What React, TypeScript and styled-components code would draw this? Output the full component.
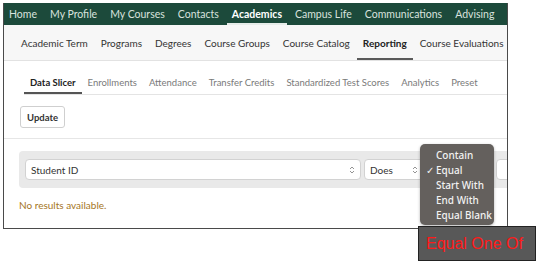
import styled, { createGlobalStyle } from 'styled-components'

const GlobalStyle = createGlobalStyle`
  html, body {
    margin: 0;
    padding: 0;
    background: #ffffff;
    font-family: Lato, "Open Sans", sans-serif;
  }
`

const Page = styled.div`
  position: relative;
  width: 540px;
  height: 265px;
  overflow: hidden;
  background: #fff;
`

const Frame = styled.div`
  margin: 3px 0 0 3px;
  width: 503px;
  height: 225px;
  border: 1px solid #4a4a4a;
  border-top: none;
  overflow: hidden;
  background: #fff;
`

const TopNav = styled.nav`
  display: flex;
  height: 22px;
  background: #1c4a3b;
  gap: 3px;
  white-space: nowrap;
  overflow: hidden;
`

const TopItem = styled.div<{ $active?: boolean }>`
  display: flex;
  align-items: center;
  flex: none;
  padding: 2px 5px 0;
  font-size: 10.5px;
  color: ${(p) => (p.$active ? '#ffffff' : '#d9e2de')};
  font-weight: ${(p) => (p.$active ? 700 : 400)};
  border-bottom: 2px solid ${(p) => (p.$active ? '#e6ece9' : 'transparent')};
  box-sizing: border-box;
`

const SubNav = styled.nav`
  display: flex;
  height: 36px;
  background: #f7f7f7;
  border-bottom: 1px solid #e2e2e2;
  padding-left: 11px;
  gap: 1px;
  box-sizing: border-box;
  white-space: nowrap;
`

const SubItem = styled.div<{ $active?: boolean }>`
  display: flex;
  align-items: center;
  padding: 2px 6px 0;
  font-size: 10px;
  color: ${(p) => (p.$active ? '#222' : '#333')};
  font-weight: ${(p) => (p.$active ? 700 : 400)};
  border-bottom: 2px solid ${(p) => (p.$active ? '#5a5a5a' : 'transparent')};
`

const Tabs = styled.div`
  display: flex;
  margin: 11px 0 0 20px;
  height: 23px;
  border-bottom: 1px solid #e4e4e4;
  box-sizing: border-box;
  white-space: nowrap;
`

const Tab = styled.div<{ $active?: boolean }>`
  display: flex;
  align-items: center;
  padding: 0 6px;
  font-size: 9.5px;
  color: ${(p) => (p.$active ? '#222' : '#7a7a7a')};
  font-weight: ${(p) => (p.$active ? 700 : 400)};
  border-bottom: 2px solid ${(p) => (p.$active ? '#555' : 'transparent')};
`

const Toolbar = styled.div`
  display: flex;
  padding: 11px 0 10px 16px;
  border-bottom: 1px solid #e6e6e6;
`

const Button = styled.button`
  height: 22px;
  padding: 0 6px;
  font-family: Lato, sans-serif;
  font-size: 9.5px;
  font-weight: 700;
  color: #333;
  background: #fff;
  border: 1px solid #cfcfcf;
  border-radius: 3px;
`

const Body = styled.div`
  padding: 12px 0 0 15px;
`

const FilterPanel = styled.div`
  display: flex;
  gap: 3px;
  padding: 8px 6px;
  background: #e9e9e9;
  border-radius: 4px;
  width: 600px;
`

const Select = styled.div<{ $w: number }>`
  display: flex;
  align-items: center;
  justify-content: space-between;
  flex: none;
  width: ${(p) => p.$w}px;
  height: 21px;
  padding: 0 5px;
  box-sizing: border-box;
  background: #fff;
  border: 1px solid #d2d2d2;
  border-radius: 4px;
  font-size: 10px;
  color: #333;
`

const Empty = styled.div`
  margin-top: 11px;
  font-size: 10px;
  color: #a57524;
`

const Menu = styled.div`
  position: absolute;
  left: 420px;
  top: 144px;
  width: 74px;
  height: 81px;
  padding-top: 4px;
  box-sizing: border-box;
  background: #64605d;
  border-radius: 5px;
  box-shadow: 0 1px 3px rgba(0, 0, 0, 0.3);
`

const MenuItem = styled.div`
  position: relative;
  height: 15px;
  line-height: 15px;
  padding-left: 16px;
  font-family: "Noto Sans", sans-serif;
  font-size: 10px;
  font-weight: 500;
  color: #f2f2f2;
`

const Check = styled.span`
  position: absolute;
  left: 6px;
`

const Hint = styled.div`
  position: absolute;
  left: 418px;
  top: 226px;
  width: 118px;
  height: 35px;
  display: flex;
  align-items: center;
  padding-left: 7px;
  box-sizing: border-box;
  background: #585858;
  border: 1px solid #222;
  font-family: "Liberation Sans", Arial, sans-serif;
  font-size: 16px;
  color: #ff1a1a;
`

const Chevron = () => (
  <svg width="6" height="10" viewBox="0 0 6 10">
    <path d="M1 4 L3 2 L5 4 M1 6 L3 8 L5 6" fill="none" stroke="#888" strokeWidth="0.9" />
  </svg>
)

const topItems = ['Home', 'My Profile', 'My Courses', 'Contacts', 'Academics', 'Campus Life', 'Communications', 'Advising', 'A']
const subItems = ['Academic Term', 'Programs', 'Degrees', 'Course Groups', 'Course Catalog', 'Reporting', 'Course Evaluations']
const tabs = ['Data Slicer', 'Enrollments', 'Attendance', 'Transfer Credits', 'Standardized Test Scores', 'Analytics', 'Preset']
const options = ['Contain', 'Equal', 'Start With', 'End With', 'Equal Blank']

export default function App() {
  return (
    <Page>
      <GlobalStyle />
      <Frame>
        <TopNav>
          {topItems.map((t) => (
            <TopItem key={t} $active={t === 'Academics'}>{t}</TopItem>
          ))}
        </TopNav>
        <SubNav>
          {subItems.map((t) => (
            <SubItem key={t} $active={t === 'Reporting'}>{t}</SubItem>
          ))}
        </SubNav>
        <Tabs>
          {tabs.map((t) => (
            <Tab key={t} $active={t === 'Data Slicer'}>{t}</Tab>
          ))}
        </Tabs>
        <Toolbar>
          <Button>Update</Button>
        </Toolbar>
        <Body>
          <FilterPanel>
            <Select $w={336}>Student ID<Chevron /></Select>
            <Select $w={60}>Does<Chevron /></Select>
            <Select $w={66} />
            <Select $w={100} />
          </FilterPanel>
          <Empty>No results available.</Empty>
        </Body>
      </Frame>
      <Menu>
        {options.map((o) => (
          <MenuItem key={o}>
            {o === 'Equal' && <Check>✓</Check>}
            {o}
          </MenuItem>
        ))}
      </Menu>
      <Hint>Equal One Of</Hint>
    </Page>
  )
}
